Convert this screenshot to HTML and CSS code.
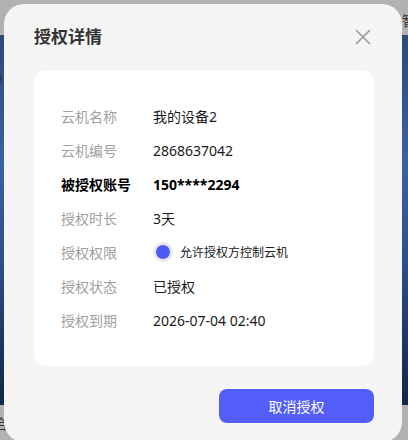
FILE: index.html
```html
<!DOCTYPE html>
<html lang="zh-CN">
<head>
    <meta charset="UTF-8">
    <meta name="viewport" content="width=device-width, initial-scale=1.0">
    <title>授权详情</title>
    <link rel="stylesheet" href="styles.css">
</head>
<body>
    <div class="page">
        <div class="page_top"><span class="side_r">智</span></div>
        <div class="banner"><span class="side_l">0</span></div>
        <div class="page_bottom"><span class="side_l">合</span></div>
    </div>

    <div class="modal">
        <div class="modal_head">
            <h3>授权详情</h3>
            <button type="button" class="close" aria-label="关闭">
                <svg width="18" height="18" viewBox="0 0 18 18">
                    <path d="M2 2L16 16M16 2L2 16" stroke="#9a9a9a" stroke-width="1.6" fill="none"/>
                </svg>
            </button>
        </div>
        <div class="card">
            <table>
                <tr><th>云机名称</th><td>我的设备2</td></tr>
                <tr><th>云机编号</th><td>2868637042</td></tr>
                <tr class="strong"><th>被授权账号</th><td>150****2294</td></tr>
                <tr><th>授权时长</th><td>3天</td></tr>
                <tr>
                    <th>授权权限</th>
                    <td><label class="radio"><span class="dot"></span>允许授权方控制云机</label></td>
                </tr>
                <tr><th>授权状态</th><td>已授权</td></tr>
                <tr><th>授权到期</th><td>2026-07-04 02:40</td></tr>
            </table>
        </div>
        <div class="modal_foot">
            <button type="button" class="btn_cancel">取消授权</button>
        </div>
    </div>
</body>
</html>
```

FILE: styles.css
```css
* {
    box-sizing: border-box;
}
body {
    margin: 0;
    font-family: "Noto Sans", "Noto Sans CJK SC", sans-serif;
    overflow: hidden;
}

/* 背景のページ（マスク越し） */
.page {
    height: 440px;
    background: #b2b2b2;
    display: flex;
    flex-direction: column;
}
.page_top {
    height: 35px;
    display: flex;
    justify-content: flex-end;
}
.banner {
    height: 370px;
    background: linear-gradient(180deg, #2d4a78 0%, #3a62a0 35%, #2e5188 60%, #1c3560 85%, #12264a 100%);
}
.page_bottom {
    flex: 1;
}
.side_l, .side_r {
    font-size: 14px;
    color: #333;
    line-height: 1;
}
.side_r {
    margin: 14px -8px 0 0;
}
.side_l {
    display: inline-block;
    margin: 36px 0 0 -6px;
}
.page_bottom .side_l {
    margin-top: 12px;
}

/* ダイアログ */
.modal {
    position: absolute;
    left: 4px;
    top: 4px;
    width: 398px;
    height: 438px;
    background: #f5f5f5;
    border-radius: 20px;
    padding: 0 28px 0 30px;
}
.modal_head {
    height: 66px;
    display: flex;
    align-items: center;
    justify-content: space-between;
    padding-bottom: 3px;
}
.modal_head h3 {
    margin: 0;
    font-size: 17px;
    font-weight: bold;
    color: #333;
}
.close {
    border: none;
    background: none;
    padding: 0;
    margin: 3px 2px 0 0;
    width: 18px;
    height: 18px;
    display: flex;
}
.card {
    background: #fff;
    border-radius: 12px;
    height: 296px;
    padding: 29px 0 0 27px;
}
table {
    border-collapse: collapse;
}
th, td {
    height: 34px;
    padding: 0;
    font-size: 14px;
    text-align: left;
    vertical-align: middle;
}
th {
    width: 92px;
    font-weight: normal;
    color: #a0a0a0;
}
td {
    color: #1a1a1a;
}
.strong th, .strong td {
    color: #000;
    font-weight: bold;
}
.radio {
    display: flex;
    align-items: center;
    font-size: 12px;
    color: #222;
}
.dot {
    width: 20px;
    height: 20px;
    border-radius: 50%;
    border: 3px solid #e9e9ef;
    background: #4f5cf3;
    margin-right: 7px;
}
.modal_foot {
    display: flex;
    justify-content: flex-end;
    padding-top: 23px;
}
.btn_cancel {
    width: 155px;
    height: 34px;
    border: none;
    border-radius: 8px;
    background: #535ef8;
    color: #fff;
    font-family: inherit;
    font-size: 14px;
}
```
